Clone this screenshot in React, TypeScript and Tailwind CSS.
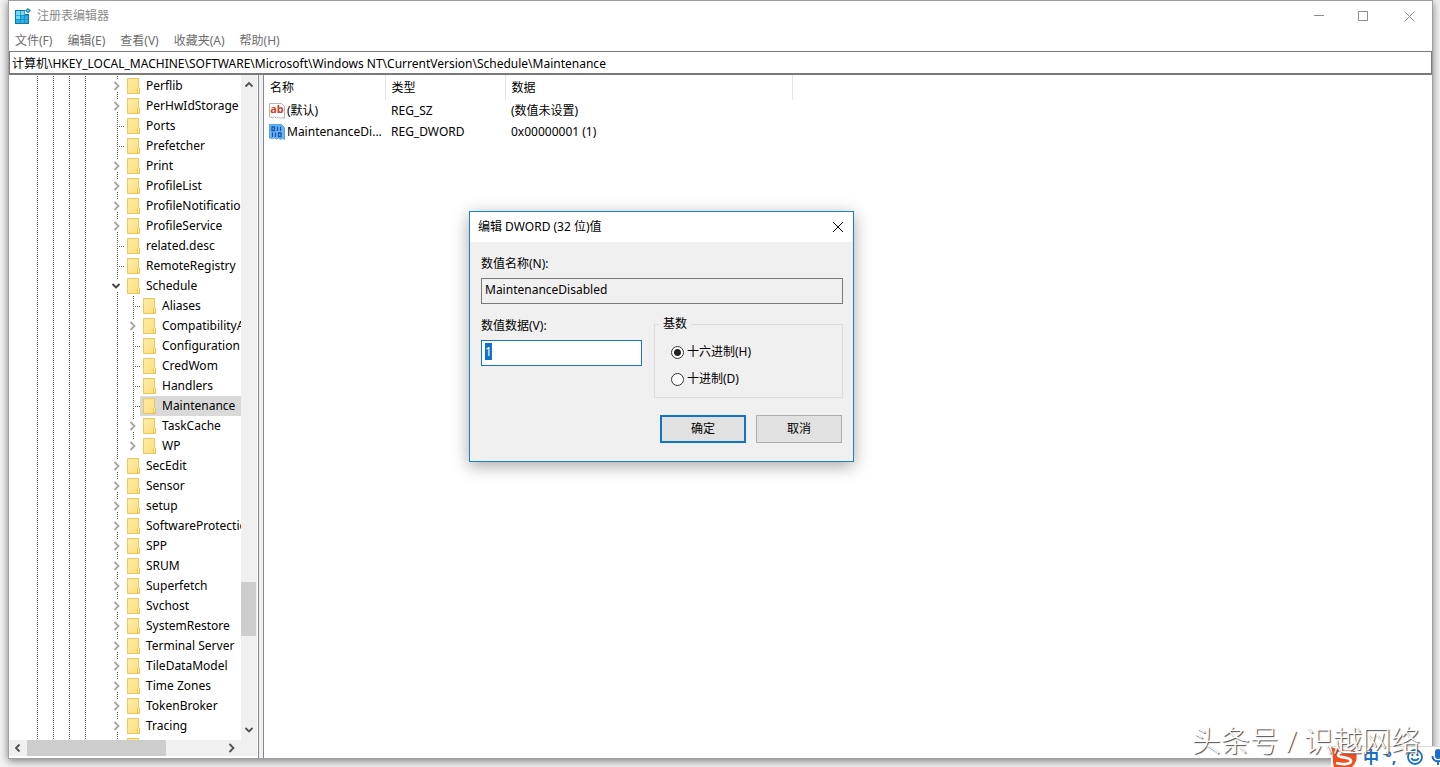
import React, { useEffect, useRef } from "react"

type NodeKind = "closed" | "open" | "leaf"
type TreeNode = { name: string; kind: NodeKind; depth?: number; last?: boolean; selected?: boolean }

const nodes: TreeNode[] = [
  { name: "Perflib", kind: "closed" },
  { name: "PerHwIdStorage", kind: "closed" },
  { name: "Ports", kind: "leaf" },
  { name: "Prefetcher", kind: "leaf" },
  { name: "Print", kind: "closed" },
  { name: "ProfileList", kind: "closed" },
  { name: "ProfileNotification", kind: "closed" },
  { name: "ProfileService", kind: "closed" },
  { name: "related.desc", kind: "leaf" },
  { name: "RemoteRegistry", kind: "leaf" },
  { name: "Schedule", kind: "open" },
  { name: "Aliases", kind: "leaf", depth: 1 },
  { name: "CompatibilityAdapter", kind: "closed", depth: 1 },
  { name: "Configuration", kind: "leaf", depth: 1 },
  { name: "CredWom", kind: "leaf", depth: 1 },
  { name: "Handlers", kind: "leaf", depth: 1 },
  { name: "Maintenance", kind: "leaf", depth: 1, selected: true },
  { name: "TaskCache", kind: "closed", depth: 1 },
  { name: "WP", kind: "closed", depth: 1, last: true },
  { name: "SecEdit", kind: "closed" },
  { name: "Sensor", kind: "closed" },
  { name: "setup", kind: "closed" },
  { name: "SoftwareProtection", kind: "closed" },
  { name: "SPP", kind: "closed" },
  { name: "SRUM", kind: "closed" },
  { name: "Superfetch", kind: "closed" },
  { name: "Svchost", kind: "closed" },
  { name: "SystemRestore", kind: "closed" },
  { name: "Terminal Server", kind: "closed" },
  { name: "TileDataModel", kind: "closed" },
  { name: "Time Zones", kind: "closed" },
  { name: "TokenBroker", kind: "closed" },
  { name: "Tracing", kind: "closed" },
  { name: "", kind: "closed" },
]

const menus = ["文件(F)", "编辑(E)", "查看(V)", "收藏夹(A)", "帮助(H)"]

function RegistryIcon() {
  return (
    <svg width="16" height="16" viewBox="0 0 16 16" aria-hidden="true">
      <rect x="0" y="2" width="14" height="14" fill="#1173a6" />
      <path d="M1 3h4v4H1zM5.500 3h4v4h-4zM1 7.500h4v3.500H1z" fill="#6bdcfb" />
      <path d="M5.500 7.500h4V11h-4zM10 7.500h3V11h-3zM5.500 11.500h4V15h-4zM10 11.500h3V15h-3zM1 11.500h4V15H1z" fill="#2db2e8" />
      <path d="M10 0h6v6h-6z" fill="#fff" />
      <path d="M13 0l3 2.500-3 3-3-3z" fill="#2789b5" />
      <path d="M13 1.500l1 1-1 1-1-1z" fill="#8fe0fa" />
    </svg>
  )
}

function FolderIcon() {
  return (
    <svg width="13" height="16" viewBox="0 0 13 16" className="shrink-0" aria-hidden="true">
      <defs>
        <linearGradient id="folder" x1="0" y1="0" x2="1" y2="1">
          <stop offset="0" stopColor="#ffeba6" />
          <stop offset="1" stopColor="#ffdf7c" />
        </linearGradient>
      </defs>
      <path d="M.5.5h11v9l1 1v5H.5z" fill="url(#folder)" stroke="#e8c75c" />
      <path d="M10.500 15v-4.500l1-1 1 1V15z" fill="#fff0b3" stroke="#e3bd49" strokeWidth=".8" />
    </svg>
  )
}

function Chevron({ dir, className }: { dir: "up" | "down" | "left" | "right"; className?: string }) {
  const d = {
    up: "M1.5 6.5L5 3l3.5 3.5",
    down: "M1.5 3L5 6.5 8.5 3",
    left: "M6.5 1.5L3 5l3.5 3.5",
    right: "M3.500 1L7.500 5l-4 4",
  }[dir]
  return (
    <svg width="10" height="10" viewBox="0 0 10 10" fill="none" stroke="currentColor" strokeWidth="1.8" className={className} aria-hidden="true">
      <path d={d} />
    </svg>
  )
}

function StringIcon() {
  return (
    <svg width="16" height="16" viewBox="0 0 16 16" className="shrink-0" aria-hidden="true">
      <path d="M.5.5h12l3 3v12l-2-1-2 1-2-1.500-2 1-2-1-2 .5-3-.5z" fill="#fff" stroke="#b5b5b5" />
      <text x="8" y="10" textAnchor="middle" fontSize="11" fontWeight="700" fill="#c8452c" fontFamily="Noto Sans, sans-serif">ab</text>
    </svg>
  )
}

function BinaryIcon() {
  return (
    <svg width="16" height="16" viewBox="0 0 16 16" className="shrink-0" aria-hidden="true">
      <path d="M.5.5h12l3 3v12l-2-1-2 1-2-1.500-2 1-2-1-2 .5-3-.5z" fill="#6db3f5" stroke="#5aa2e6" />
      <g fill="none" stroke="#0f58ab" strokeWidth="1.300">
        <path d="M3 3h2.500v3.500H3zM8.500 2.500V7M11.500 2.500V7M3.500 8.500V13M6.500 8.500V13M9.500 9H12v3.500H9.500z" />
      </g>
    </svg>
  )
}

function Dots() {
  return <span className="w-px bg-[repeating-linear-gradient(#666_0_1px,transparent_1px_2px)]" />
}

function Guides() {
  return (
    <span className="flex shrink-0 gap-[15px] self-stretch pr-[22px] pl-7" aria-hidden="true">
      <Dots />
      <Dots />
      <Dots />
      <Dots />
    </span>
  )
}

function Branch({ kind, last }: { kind: NodeKind; last?: boolean }) {
  if (kind === "leaf") {
    return (
      <span className="flex w-4 shrink-0 items-center self-stretch pl-[9px]" aria-hidden="true">
        <span className="flex self-stretch"><Dots /></span>
        <span className="h-px flex-1 bg-[repeating-linear-gradient(90deg,transparent_0_1px,#666_1px_2px)]" />
      </span>
    )
  }
  return (
    <span className="flex w-4 shrink-0 flex-col self-stretch" aria-hidden="true">
      <span className="flex h-1 pl-[9px]"><Dots /></span>
      <Chevron dir={kind === "open" ? "down" : "right"} className={kind === "open" ? "my-px ml-[3px] shrink-0 text-[#404040]" : "my-px ml-[3px] shrink-0 text-[#a6a6a6]"} />
      <span className="flex flex-1 pl-[9px]">{!last && <Dots />}</span>
    </span>
  )
}

function TreeRow({ node }: { node: TreeNode }) {
  return (
    <li className="flex h-5 items-center whitespace-nowrap">
      <Guides />
      {node.depth === 1 && (
        <span className="flex w-4 shrink-0 self-stretch pl-[9px]" aria-hidden="true"><Dots /></span>
      )}
      <Branch kind={node.kind} last={node.last} />
      <span className={node.selected ? "flex h-5 flex-1 items-center gap-1.5 bg-[#d9d9d9] pl-[3px]" : "flex h-5 flex-1 items-center gap-1.5 pl-[3px]"}>
        <FolderIcon />
        {node.name}
      </span>
    </li>
  )
}

function TreePane() {
  return (
    <nav className="flex w-[250px] shrink-0 flex-col border-r border-[#828790]" aria-label="注册表项">
      <div className="flex min-h-0 flex-1">
        <ul className="min-w-0 flex-1 overflow-hidden pt-px">
          {nodes.map((n, i) => <TreeRow key={i} node={n} />)}
        </ul>
        <div className="mr-px flex w-4 shrink-0 flex-col items-center bg-[#f0f0f0] text-[#505050]">
          <button aria-label="向上滚动" className="flex h-5 w-full items-center justify-center"><Chevron dir="up" /></button>
          <div className="flex-[488]" />
          <div className="mr-px w-[15px] flex-[54] bg-[#cdcdcd]" />
          <div className="flex-[84]" />
          <button aria-label="向下滚动" className="flex h-5 w-full items-center justify-center"><Chevron dir="down" /></button>
        </div>
      </div>
      <div className="mr-px mb-0.5 flex h-4 shrink-0 items-center bg-[#f0f0f0] pr-4 text-[#505050]">
        <button aria-label="向左滚动" className="flex h-full w-[18px] items-center justify-center"><Chevron dir="left" /></button>
        <div className="h-full w-[139px] bg-[#cdcdcd]" />
        <div className="flex-1" />
        <button aria-label="向右滚动" className="flex h-full w-5 items-center justify-center"><Chevron dir="right" /></button>
      </div>
    </nav>
  )
}

function ValuesPane() {
  return (
    <section className="min-w-0 flex-1 border-l border-[#828790]">
      <table className="w-[529px] table-fixed text-left">
        <thead>
          <tr className="h-[25px]">
            <th className="w-[121px] border-r border-[#e5e5e5] pl-1.5 font-normal">名称</th>
            <th className="w-[120px] border-r border-[#e5e5e5] pl-1.5 font-normal">类型</th>
            <th className="border-r border-[#e5e5e5] pl-1.5 font-normal">数据</th>
          </tr>
        </thead>
        <tbody>
          <tr className="h-[21px]">
            <td className="pl-[5px]"><span className="flex items-center gap-0.5"><StringIcon />(默认)</span></td>
            <td className="pl-1.5">REG_SZ</td>
            <td className="pl-1.5">(数值未设置)</td>
          </tr>
          <tr className="h-[21px]">
            <td className="pl-[5px]"><span className="flex items-center gap-0.5 whitespace-nowrap"><BinaryIcon />MaintenanceDi...</span></td>
            <td className="pl-1.5">REG_DWORD</td>
            <td className="pl-1.5">0x00000001 (1)</td>
          </tr>
        </tbody>
      </table>
    </section>
  )
}

function EditDialog() {
  const input = useRef<HTMLInputElement>(null)

  useEffect(() => {
    input.current?.focus()
    input.current?.select()
  }, [])

  const radio = "size-[13px] appearance-none rounded-full border border-[#333] bg-white checked:bg-[radial-gradient(#222_0_3px,white_4px)]"

  return (
    <div role="dialog" aria-labelledby="dlg-title" className="absolute top-[211px] left-[469px] w-[385px] border border-[#1883c7] bg-[#f0f0f0] shadow-[0_4px_16px_rgba(0,0,0,0.35)]">
      <div className="flex h-[30px] items-center justify-between bg-white pr-[9px] pl-2">
        <h2 id="dlg-title">编辑 DWORD (32 位)值</h2>
        <button aria-label="关闭">
          <svg width="12" height="12" viewBox="0 0 12 12" stroke="#000"><path d="M1 1l10 10M11 1L1 11" /></svg>
        </button>
      </div>
      <form className="pt-3 pr-2.5 pb-[18px] pl-[11px]" onSubmit={(e) => e.preventDefault()}>
        <label htmlFor="value-name" className="block h-5 leading-5">数值名称(N):</label>
        <input id="value-name" readOnly value="MaintenanceDisabled" className="mt-1 block h-[26px] w-full border border-[#7a7a7a] bg-[#f0f0f0] px-[3px] pb-1 outline-none" />
        <div className="mt-3 flex gap-3">
          <div className="w-[161px]">
            <label htmlFor="value-data" className="block h-5 leading-5">数值数据(V):</label>
            <input ref={input} id="value-data" defaultValue="1" className="mt-1 block h-[26px] w-full border border-[#1a76bb] bg-white px-[3px] pb-1 outline-none selection:bg-[#0f72cc] selection:text-white" />
          </div>
          <fieldset className="h-[82px] flex-1 border border-[#dcdcdc] pl-4">
            <legend className="-ml-3 px-1 leading-4">基数</legend>
            <label className="mt-2.5 flex h-5 items-center gap-[3px]"><input type="radio" name="base" defaultChecked className={radio} />十六进制(H)</label>
            <label className="mt-[7px] flex h-5 items-center gap-[3px]"><input type="radio" name="base" className={radio} />十进制(D)</label>
          </fieldset>
        </div>
        <div className="mt-[17px] mr-px flex justify-end gap-2.5">
          <button type="submit" className="h-7 w-[86px] border-2 border-[#0f74c8] bg-[#e1e1e1]">确定</button>
          <button type="button" className="h-7 w-[86px] border border-[#adadad] bg-[#e1e1e1]">取消</button>
        </div>
      </form>
    </div>
  )
}

function ImeBar() {
  return (
    <div className="absolute right-0 bottom-0 flex h-[21px] w-[109px] items-center gap-1.5 overflow-hidden border-t border-[#ddd] bg-white text-[#1c6fc4]">
      <svg width="26" height="20" viewBox="0 0 26 20" className="shrink-0" aria-hidden="true">
        <path d="M0 0l6 2 18 2c3 5 2 11-3 16H3C1 14 3 8 0 0z" fill="#f04e1d" />
        <path d="M22 6C12 4 7 5 7 8c0 3 13 2 13 6 0 3-7 4-15 2" fill="none" stroke="#fff" strokeWidth="2.800" />
      </svg>
      <span className="w-4 shrink-0 text-base leading-5 font-bold">中</span>
      <span className="w-4 shrink-0 text-base leading-5 font-bold">°,</span>
      <svg width="16" height="16" viewBox="0 0 16 16" fill="none" stroke="currentColor" strokeWidth="1.800" className="shrink-0" aria-hidden="true">
        <circle cx="8" cy="8" r="7" />
        <path d="M4.500 9c1 3 6 3 7 0M5.500 5v2M10.500 5v2" />
      </svg>
      <svg width="14" height="16" viewBox="0 0 14 16" className="ml-0.5 shrink-0" aria-hidden="true">
        <rect x="4" y="0" width="6" height="10" rx="3" fill="currentColor" />
        <path d="M1.500 7c0 7 11 7 11 0M7 12v4" fill="none" stroke="currentColor" strokeWidth="2" />
      </svg>
    </div>
  )
}

export default function App() {
  return (
    <div className="relative h-screen w-full overflow-hidden bg-[#f3f3f3] pr-[7px] pb-2 pl-2 font-['Noto_Sans','Noto_Sans_CJK_SC',sans-serif] text-xs text-black">
      <div className="flex h-full flex-col border border-[#a0a0a0] bg-white shadow-[0_2px_8px_rgba(0,0,0,0.5)]">
        <header className="flex h-[30px] shrink-0 items-center gap-1.5 pl-1.5 text-[#8c8c8c]">
          <RegistryIcon />
          <h1 className="flex-1">注册表编辑器</h1>
          <div className="flex items-center">
            <button aria-label="最小化" className="flex w-[45px] justify-center"><svg width="10" height="11" viewBox="0 0 10 11" stroke="currentColor"><path d="M0 4.500h10" /></svg></button>
            <button aria-label="最大化" className="flex w-[45px] justify-center"><svg width="11" height="11" viewBox="0 0 11 11" fill="none" stroke="currentColor"><path d="M.5.5h9v9h-9z" /></svg></button>
            <button aria-label="关闭" className="flex w-[46px] justify-center"><svg width="11" height="11" viewBox="0 0 11 11" stroke="currentColor"><path d="M.5.5l10 10M10.500.5l-10 10" /></svg></button>
          </div>
        </header>
        <div className="flex h-5 shrink-0 items-center gap-[15px] pl-1.5 text-[#6d6d6d]" role="menubar">
          {menus.map((m) => <button key={m} role="menuitem">{m}</button>)}
        </div>
        <input aria-label="地址" readOnly value="计算机\HKEY_LOCAL_MACHINE\SOFTWARE\Microsoft\Windows NT\CurrentVersion\Schedule\Maintenance" className="h-[23px] shrink-0 border border-[#7a7a7a] px-0.5 outline-none" />
        <main className="flex min-h-0 flex-1 gap-1 border-t border-[#7a7a7a] bg-[#f0f0f0] *:bg-white">
          <TreePane />
          <ValuesPane />
        </main>
      </div>
      <EditDialog />
      <ImeBar />
      <p className="absolute right-5 bottom-2 text-[29px] leading-9 font-light text-white [text-shadow:1px_1px_1px_#444]">头条号 / 识越网络</p>
    </div>
  )
}
